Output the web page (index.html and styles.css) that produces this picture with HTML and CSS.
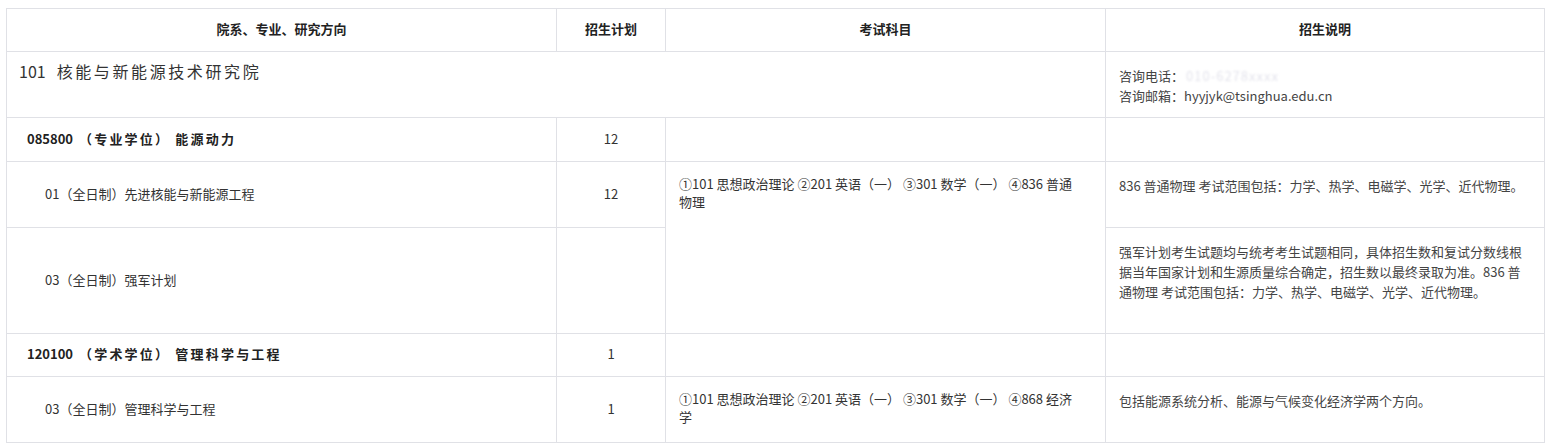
FILE: index.html
```html
<!DOCTYPE html>
<html lang="zh-CN">
<head>
<meta charset="utf-8">
<title>招生目录</title>
<link rel="stylesheet" href="styles.css">
</head>
<body>
<table class="catalog">
  <colgroup>
    <col class="c-dept">
    <col class="c-plan">
    <col class="c-exam">
    <col class="c-note">
  </colgroup>
  <thead>
    <tr class="r-head">
      <th>院系、专业、研究方向</th>
      <th>招生计划</th>
      <th>考试科目</th>
      <th>招生说明</th>
    </tr>
  </thead>
  <tbody>
    <tr class="r-dept">
      <td colspan="3" class="dept-name"><span class="dept-code">101</span><span class="dept-title">核能与新能源技术研究院</span></td>
      <td class="note contact">咨询电话：<span class="masked">010-6278xxxx</span><br>咨询邮箱：hyyjyk@tsinghua.edu.cn</td>
    </tr>
    <tr class="r-major">
      <td class="major"><span class="code">085800</span> <span class="mname">（专业学位） 能源动力</span></td>
      <td class="num">12</td>
      <td></td>
      <td></td>
    </tr>
    <tr class="r-dir">
      <td class="dir">01（全日制）先进核能与新能源工程</td>
      <td class="num">12</td>
      <td rowspan="2" class="exam">①101 思想政治理论 ②201 英语（一） ③301 数学（一） ④836 普通物理</td>
      <td class="note">836 普通物理 考试范围包括：力学、热学、电磁学、光学、近代物理。</td>
    </tr>
    <tr class="r-dir-tall">
      <td class="dir">03（全日制）强军计划</td>
      <td class="num"></td>
      <td class="note">强军计划考生试题均与统考考生试题相同，具体招生数和复试分数线根据当年国家计划和生源质量综合确定，招生数以最终录取为准。836 普通物理 考试范围包括：力学、热学、电磁学、光学、近代物理。</td>
    </tr>
    <tr class="r-major r-major2">
      <td class="major"><span class="code">120100</span> <span class="mname">（学术学位） 管理科学与工程</span></td>
      <td class="num">1</td>
      <td></td>
      <td></td>
    </tr>
    <tr class="r-dir">
      <td class="dir">03（全日制）管理科学与工程</td>
      <td class="num">1</td>
      <td class="exam">①101 思想政治理论 ②201 英语（一） ③301 数学（一） ④868 经济学</td>
      <td class="note">包括能源系统分析、能源与气候变化经济学两个方向。</td>
    </tr>
  </tbody>
</table>
</body>
</html>
```

FILE: styles.css
```css
html, body {
  background: #ffffff;
}
body {
  margin: 8px 0 0 6px;
  font-family: "Noto Sans CJK SC", "Microsoft YaHei", "Liberation Sans", sans-serif;
  font-size: 13px;
  color: #333333;
}
.catalog {
  width: 1538px;
  border-collapse: collapse;
  table-layout: fixed;
}
.c-dept { width: 550px; }
.c-plan { width: 109px; }
.c-exam { width: 440px; }
.c-note { width: 439px; }

.catalog th,
.catalog td {
  border: 1px solid #e0e1e6;
  padding: 0 13px 2px;
  vertical-align: middle;
  line-height: 18px;
  box-sizing: border-box;
}
.catalog th {
  font-weight: bold;
  color: #222222;
  text-align: center;
}
.r-head { height: 43px; }
.r-dept { height: 66px; }
.r-major { height: 44px; }
.r-major2 { height: 43px; }
.r-dir { height: 66px; }
.r-dir-tall { height: 106px; }

.catalog td.dept-name {
  vertical-align: top;
  padding: 8px 12px 0;
  font-size: 16px;
  line-height: 22px;
  color: #333333;
}
.dept-title {
  margin-left: 11px;
  letter-spacing: 2.6px;
}
.catalog td.contact {
  padding-top: 10px;
  line-height: 21px;
}
.masked {
  color: #e4e4ec;
  filter: blur(1px);
  letter-spacing: 1px;
  margin-left: 2px;
}
.catalog td.major {
  padding-left: 20px;
  font-weight: bold;
  color: #222222;
}
.mname {
  letter-spacing: 2.2px;
  margin-left: 3px;
}
.catalog td.dir {
  padding-left: 38px;
}
.catalog td.num {
  text-align: center;
}
.catalog td.exam {
  vertical-align: top;
  padding: 13px 25px 0 13px;
  line-height: 18px;
}
.catalog td.note {
  vertical-align: top;
  padding-top: 14px;
  line-height: 20px;
  color: #444444;
}
```
